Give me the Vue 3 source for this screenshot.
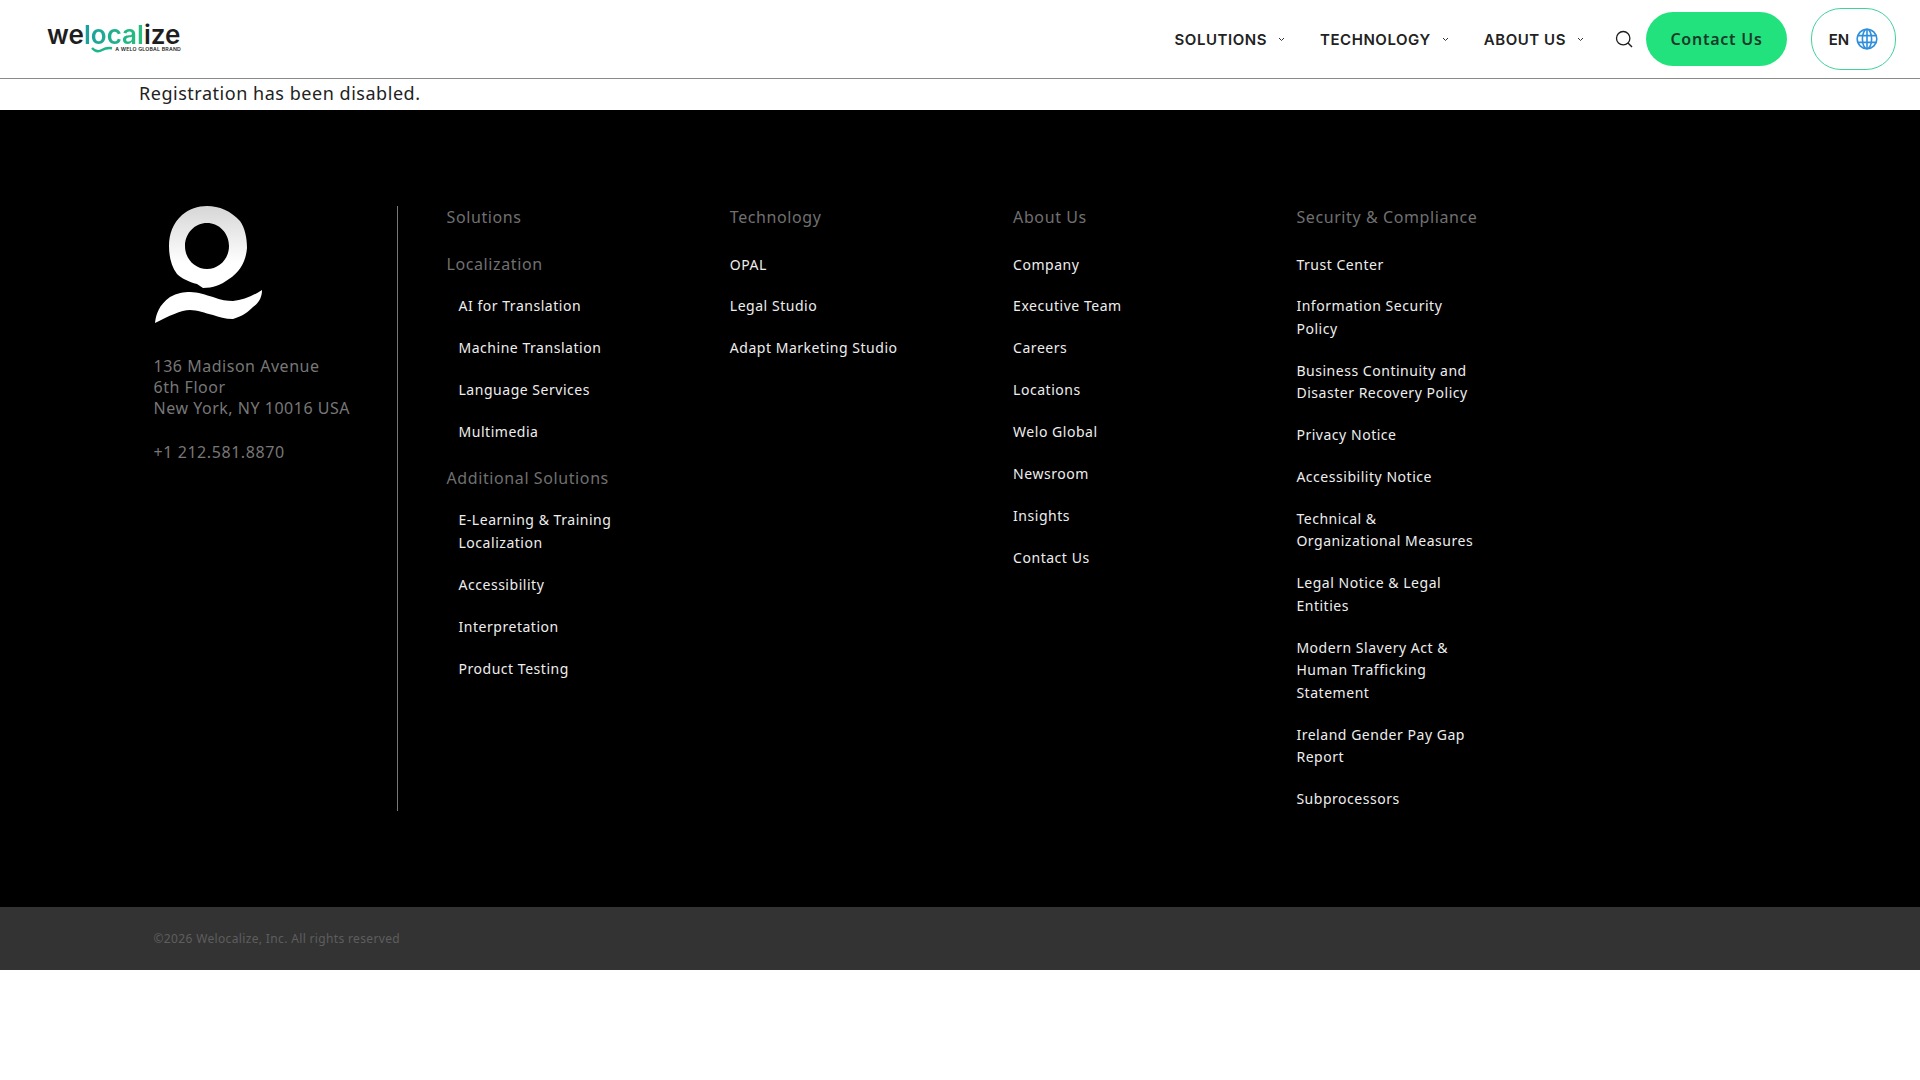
<script setup>
const localization = ['AI for Translation', 'Machine Translation', 'Language Services', 'Multimedia']
const additional = ['E-Learning & Training Localization', 'Accessibility', 'Interpretation', 'Product Testing']
const technology = ['OPAL', 'Legal Studio', 'Adapt Marketing Studio']
const about = ['Company', 'Executive Team', 'Careers', 'Locations', 'Welo Global', 'Newsroom', 'Insights', 'Contact Us']
const security = ['Trust Center', 'Information Security Policy', 'Business Continuity and Disaster Recovery Policy', 'Privacy Notice', 'Accessibility Notice', 'Technical & Organizational Measures', 'Legal Notice & Legal Entities', 'Modern Slavery Act & Human Trafficking Statement', 'Ireland Gender Pay Gap Report', 'Subprocessors']
const nav = ['SOLUTIONS', 'TECHNOLOGY', 'ABOUT US']
</script>

<template>
  <div class="page">
    <header class="header">
      <div class="logo">
        <div class="wordmark"><span class="dark">we</span><span class="grad">local</span><span class="dark">ize</span></div>
        <svg class="wave" width="22" height="8" viewBox="0 0 22 8"><path d="M1 2C5 6.5 8 5.8 11 4S17 1.6 21 2.2" fill="none" stroke="#1fb58a" stroke-width="2.4"/></svg>
        <div class="tag">A WELO GLOBAL BRAND</div>
      </div>
      <nav class="nav">
        <a v-for="n in nav" :key="n" class="nav-item">{{ n }}
          <svg width="7" height="5" viewBox="0 0 7 5"><path d="M1 1l2.5 2.5L6 1" fill="none" stroke="#333" stroke-width="1"/></svg>
        </a>
      </nav>
      <svg class="search" width="18" height="18" viewBox="0 0 18 18"><circle cx="8.2" cy="8.2" r="6.7" fill="none" stroke="#1c1c1c" stroke-width="1.3"/><path d="M13 13l4 4" stroke="#1c1c1c" stroke-width="1.5"/></svg>
      <a class="contact">Contact Us</a>
      <div class="lang">
        <span>EN</span>
        <svg width="22" height="22" viewBox="0 0 22 22" fill="none" stroke="#2f8fdc" stroke-width="1.6"><circle cx="11" cy="11" r="9.8"/><ellipse cx="11" cy="11" rx="4.6" ry="9.8"/><path d="M11 1v20M1.8 7.6h18.4M1.8 14.4h18.4"/></svg>
      </div>
    </header>
    <p class="message">Registration has been disabled.</p>
    <footer class="footer">
      <div class="footer-main">
        <div class="brand">
          <svg class="mark" width="112" height="118" viewBox="0 0 112 118">
            <defs><linearGradient id="mk" x1="0" y1="0" x2="0" y2="1"><stop offset="0" stop-color="#d6d6d6"/><stop offset=".7" stop-color="#fff"/></linearGradient></defs>
            <path fill="url(#mk)" fill-rule="evenodd" d="M54 0C66 0 78 5 87 15C92 22 94 32 94 42C93 55 87 66 76 73C68 79 60 82 50 82L44 78C36 76 28 72 24 68C18 60 16 50 16 40C16 28 20 17 29 9C36 3 45 0 54 0ZM54 17C42 17 32 27 32 40C32 53 42 63 54 63C66 63 76 53 76 40C76 27 66 17 54 17Z"/>
            <path fill="#fff" d="M2 117C3 108 6 99 17 91C24 87 31 86 37 86C45 86 53 89 60 91C68 94 74 95 80 95C90 94 100 90 109 84C109 90 107 96 100 101C95 106 90 110 80 113C72 113 66 111 60 109C52 107 44 104 37 104C28 104 16 110 2 117Z"/>
          </svg>
          <address class="addr">136 Madison Avenue<br>6th Floor<br>New York, NY 10016 USA</address>
          <div class="phone">+1 212.581.8870</div>
        </div>
        <div class="cols">
          <div class="col">
            <h4 class="title">Solutions</h4>
            <h4 class="sub">Localization</h4>
            <ul class="indent"><li v-for="i in localization" :key="i">{{ i }}</li></ul>
            <h4 class="sub second">Additional Solutions</h4>
            <ul class="indent"><li v-for="i in additional" :key="i">{{ i }}</li></ul>
          </div>
          <div class="col">
            <h4 class="title">Technology</h4>
            <ul class="flat"><li v-for="i in technology" :key="i">{{ i }}</li></ul>
          </div>
          <div class="col">
            <h4 class="title">About Us</h4>
            <ul class="flat"><li v-for="i in about" :key="i">{{ i }}</li></ul>
          </div>
          <div class="col">
            <h4 class="title">Security &amp; Compliance</h4>
            <ul class="flat"><li v-for="i in security" :key="i">{{ i }}</li></ul>
          </div>
        </div>
      </div>
      <div class="bottom"><span>©2026 Welocalize, Inc. All rights reserved</span></div>
    </footer>
  </div>
</template>

<style>
html, body { margin: 0; background: #fff; }
</style>

<style scoped>
.page { font-family: "Noto Sans", sans-serif; color: #222; }
.header { height: 78px; border-bottom: 1px solid #8a8a8a; display: flex; align-items: center; padding: 0 24px 0 47px; box-sizing: content-box; }
.logo { width: 134px; height: 44px; position: relative; margin-right: auto; }
.wordmark { font-family: Inter, sans-serif; font-weight: 600; font-size: 26px; line-height: 22px; letter-spacing: .05px; position: absolute; top: 7px; left: 0; white-space: nowrap; }
.wordmark span { display: inline-block; line-height: 22px; }
.dark { color: #1e1e1e; }
.grad { background: linear-gradient(90deg, #1a9fa0 0, #27c07a 100%); -webkit-background-clip: text; background-clip: text; color: transparent; }
.wave { position: absolute; left: 44px; top: 29px; }
.tag { position: absolute; right: 0; top: 29px; font-size: 5.2px; font-family: Inter, sans-serif; font-weight: 600; letter-spacing: .2px; white-space: nowrap; color: #222; line-height: 6px; }
.nav { display: flex; gap: 35px; margin-right: 31px; }
.nav-item { font-family: Inter, sans-serif; font-weight: 600; font-size: 15px; letter-spacing: .55px; display: flex; align-items: center; gap: 11px; color: #222; }
.search { margin-right: 13px; }
.contact { width: 141px; height: 54px; border-radius: 27px; background: #22e27e; display: flex; align-items: center; justify-content: center; font-weight: 600; font-size: 16px; letter-spacing: .75px; color: #1a3a28; margin-right: 24px; }
.lang { width: 83px; height: 60px; border: 1.5px solid #3fd39a; border-radius: 30px; display: flex; align-items: center; justify-content: center; gap: 7px; font-family: Inter, sans-serif; font-weight: 600; font-size: 15px; }
.message { margin: 0; padding-left: 139px; height: 31px; line-height: 29px; font-size: 18px; letter-spacing: .53px; color: #222; }
.footer { background: #000; }
.footer-main { height: 797px; padding: 96px 0 0 153px; box-sizing: border-box; display: flex; }
.brand { width: 244px; height: 605px; border-right: 1px solid #777; box-sizing: content-box; }
.mark { display: block; }
.addr { font-style: normal; font-size: 16px; line-height: 21px; letter-spacing: .52px; color: #777; margin: 32px 0 0 .5px; }
.phone { font-size: 16px; line-height: 21px; letter-spacing: .57px; color: #777; margin: 23px 0 0 .5px; }
.cols { display: grid; grid-template-columns: repeat(4, 283.3px); margin-left: 48.5px; }
.col { width: 183px; }
.col:first-child { width: 230px; }
h4 { margin: 0; font-weight: 400; font-size: 16px; line-height: 22px; letter-spacing: .6px; color: #707070; }
.sub { margin-top: 25px; }
.sub.second { margin-top: 24px; }
ul { list-style: none; margin: 0; padding: 0; font-size: 14px; line-height: 22.4px; letter-spacing: .53px; color: #eee; }
li { margin-top: 19.6px; }
.indent { padding-left: 12px; padding-right: 50px; }
.second + .indent li:first-child { margin-top: 20.1px; }
.flat { margin-top: 26.2px; }
.flat li:first-child { margin-top: 0; }
.flat li:nth-child(2) { margin-top: 18.6px; }
.bottom { height: 63px; background: #333; padding-left: 153.5px; display: flex; align-items: center; font-size: 12px; color: #5e5e5e; letter-spacing: .35px; }
</style>
